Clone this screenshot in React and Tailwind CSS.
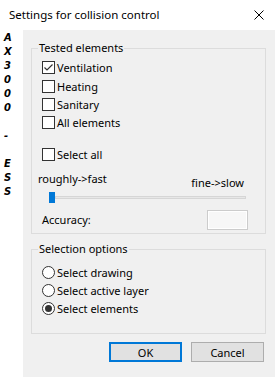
import { useState } from 'react';

const font = { fontFamily: '"Noto Sans", "Open Sans", sans-serif' };

function CheckBox({ label, checked, onToggle }) {
  return (
    <div className="flex items-center h-[13px] cursor-default" onClick={onToggle}>
      <div className="w-[13px] h-[13px] border border-[#333333] bg-white flex items-center justify-center shrink-0">
        {checked && (
          <svg width="11" height="11" viewBox="0 0 11 11">
            <polyline points="1.5,5.5 4,8 9.5,2.5" fill="none" stroke="#333333" strokeWidth="1.2" />
          </svg>
        )}
      </div>
      <span className="ml-[2px] text-[11px] leading-[14px] text-black">{label}</span>
    </div>
  );
}

function Radio({ label, checked, onSelect }) {
  return (
    <div className="flex items-center h-[13px] cursor-default" onClick={onSelect}>
      <div className="w-[13px] h-[13px] rounded-full border border-[#333333] bg-white flex items-center justify-center shrink-0">
        {checked && <div className="w-[7px] h-[7px] rounded-full bg-[#333333]" />}
      </div>
      <span className="ml-[2px] text-[11px] leading-[14px] text-black">{label}</span>
    </div>
  );
}

// group box header: line, caption, line — the box below carries the side and bottom borders
function GroupHeader({ title }) {
  return (
    <div className="flex h-[14px]">
      <div className="w-[7px] mt-[7px] border-t border-l border-[#dcdcdc]" />
      <span className="px-[1px] text-[11px] leading-[14px] text-black">{title}</span>
      <div className="flex-1 mt-[7px] border-t border-r border-[#dcdcdc]" />
    </div>
  );
}

export default function App() {
  const [tested, setTested] = useState({ vent: true, heat: false, san: false, all: false, selAll: false });
  const [selection, setSelection] = useState('elements');

  const toggle = (k) => setTested({ ...tested, [k]: !tested[k] });
  const letters = ['A', 'X', '3', '0', '0', '0', '', '-', '', 'E', 'S', 'S'];

  return (
    <div className="w-[275px] h-[377px] bg-white flex flex-col overflow-hidden" style={font}>
      <div className="h-[30px] flex items-center justify-between pl-[9px] pr-[11px] shrink-0">
        <span className="text-[11.5px] text-black">Settings for collision control</span>
        <svg width="10" height="10" viewBox="0 0 10 10">
          <path d="M0.5 0.5 L9.5 9.5 M9.5 0.5 L0.5 9.5" stroke="#000" strokeWidth="1" />
        </svg>
      </div>

      <div className="flex flex-1">
        <div className="w-[23px] shrink-0 bg-white flex flex-col items-start pl-[4px] pt-[1px]">
          {letters.map((l, i) => (
            <div key={i} className="h-[14px] leading-[14px] text-[10px] font-bold italic text-black" style={{ fontFamily: '"DejaVu Sans", sans-serif' }}>
              {l}
            </div>
          ))}
        </div>

        <div className="flex-1 bg-[#f0f0f0] pl-[8px] pr-[9px] pt-[11px]">
          <GroupHeader title="Tested elements" />
          <div className="h-[179px] border-x border-b border-[#dcdcdc] pl-[6px] pr-[8px] pt-[6px]">
            <div className="ml-[4px] flex flex-col">
              <CheckBox label="Ventilation" checked={tested.vent} onToggle={() => toggle('vent')} />
              <div className="mt-[6px]"><CheckBox label="Heating" checked={tested.heat} onToggle={() => toggle('heat')} /></div>
              <div className="mt-[5px]"><CheckBox label="Sanitary" checked={tested.san} onToggle={() => toggle('san')} /></div>
              <div className="mt-[5px]"><CheckBox label="All elements" checked={tested.all} onToggle={() => toggle('all')} /></div>
              <div className="mt-[19px]"><CheckBox label="Select all" checked={tested.selAll} onToggle={() => toggle('selAll')} /></div>
            </div>

            <div className="mt-[11px] flex justify-between pr-[13px]">
              <span className="text-[11px] leading-[14px] text-black">roughly-&gt;fast</span>
              <span className="text-[11px] leading-[14px] text-black mt-[4px]">fine-&gt;slow</span>
            </div>
            <div className="mt-[2px] ml-[11px] mr-[11px] h-[11px] flex items-center">
              <div className="w-[6px] h-[11px] bg-[#0078d7] shrink-0" />
              <div className="flex-1 h-[3px] bg-[#e7e7e7] border border-[#d6d6d6]" />
            </div>
            <div className="mt-[7px] ml-[4px] flex items-center justify-between pr-[9px]">
              <span className="text-[11px] leading-[14px] text-black">Accuracy:</span>
              <div className="w-[41px] h-[20px] border border-[#cccccc] bg-white p-[1px]">
                <div className="w-full h-full bg-[#f7f7f7]" />
              </div>
            </div>
          </div>

          <div className="mt-[8px]">
            <GroupHeader title="Selection options" />
          </div>
          <div className="h-[78px] border-x border-b border-[#dcdcdc] pl-[10px] pr-[8px] pt-[10px]">
            <div className="flex flex-col">
              <Radio label="Select drawing" checked={selection === 'drawing'} onSelect={() => setSelection('drawing')} />
              <div className="mt-[5px]"><Radio label="Select active layer" checked={selection === 'layer'} onSelect={() => setSelection('layer')} /></div>
              <div className="mt-[5px]"><Radio label="Select elements" checked={selection === 'elements'} onSelect={() => setSelection('elements')} /></div>
            </div>
          </div>

          <div className="mt-[8px] flex justify-end gap-[9px] pr-[2px]">
            <button className="w-[73px] h-[20px] bg-[#e1e1e1] border-2 border-[#0078d7] text-[11px] text-black leading-none">OK</button>
            <button className="w-[73px] h-[20px] bg-[#e1e1e1] border border-[#adadad] text-[11px] text-black leading-none">Cancel</button>
          </div>
        </div>
      </div>
    </div>
  );
}
